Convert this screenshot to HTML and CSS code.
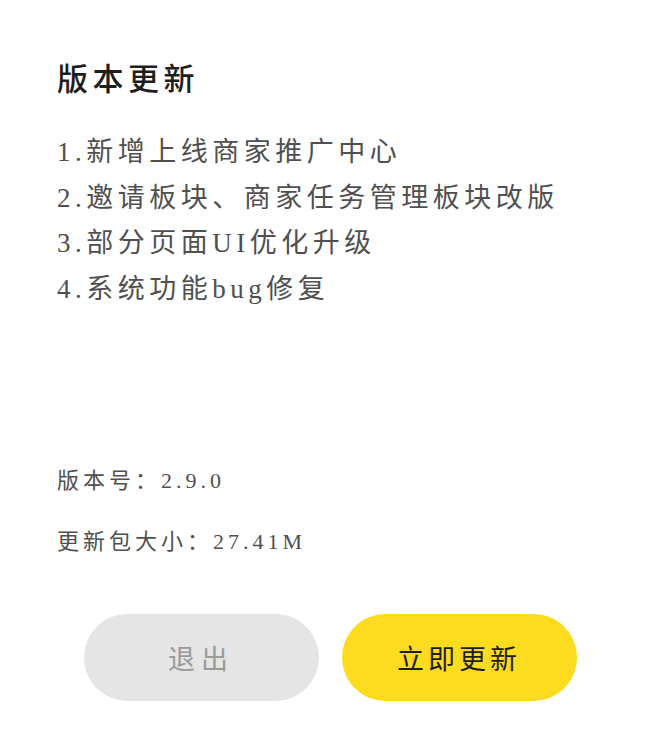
FILE: index.html
```html
<!DOCTYPE html>
<html lang="zh-CN">
<head>
    <meta charset="UTF-8">
    <meta name="viewport" content="width=device-width, initial-scale=1.0">
    <title>版本更新</title>
    <link rel="stylesheet" href="styles.css">
</head>
<body>
    <div class="dialog">
        <h1 class="title">版本更新</h1>

        <div class="notes">
            <p>1.新增上线商家推广中心</p>
            <p>2.邀请板块、商家任务管理板块改版</p>
            <p>3.部分页面UI优化升级</p>
            <p>4.系统功能bug修复</p>
        </div>

        <div class="info">
            <p class="version">版本号：2.9.0</p>
            <p class="size">更新包大小：27.41M</p>
        </div>

        <div class="actions">
            <button class="btn btn-quit">退出</button>
            <button class="btn btn-update">立即更新</button>
        </div>
    </div>
</body>
</html>
```

FILE: styles.css
```css
body {
    margin: 0;
    background-color: #fff;
    font-family: "Liberation Serif", "Noto Sans CJK SC", serif;
}
.dialog {
    padding: 0 57px;
}
.title {
    margin: 60px 0 0;
    font-size: 31px;
    line-height: 40px;
    font-weight: 500;
    letter-spacing: 4.5px;
    color: #1e1e1e;
}
.notes {
    margin-top: 30px;
}
.notes p {
    margin: 0;
    font-size: 27px;
    line-height: 45.5px;
    letter-spacing: 4.5px;
    color: #505050;
}
.info {
    margin-top: 154px;
}
.info p {
    margin: 0;
    font-size: 22px;
    line-height: 30px;
    letter-spacing: 4px;
    color: #505050;
}
.info .size {
    margin-top: 31px;
}
.actions {
    display: flex;
    justify-content: center;
    gap: 23px;
    margin-top: 57px;
}
.btn {
    width: 235px;
    height: 87px;
    border: none;
    border-radius: 44px;
    font-family: "Liberation Serif", "Noto Sans CJK SC", serif;
    font-size: 27px;
    letter-spacing: 4px;
    cursor: pointer;
}
.btn-quit {
    background-color: #e5e5e5;
    color: #9a9a9a;
    letter-spacing: 6px;
}
.btn-update {
    background-color: #fddb1f;
    color: #1e1e1e;
}
```
